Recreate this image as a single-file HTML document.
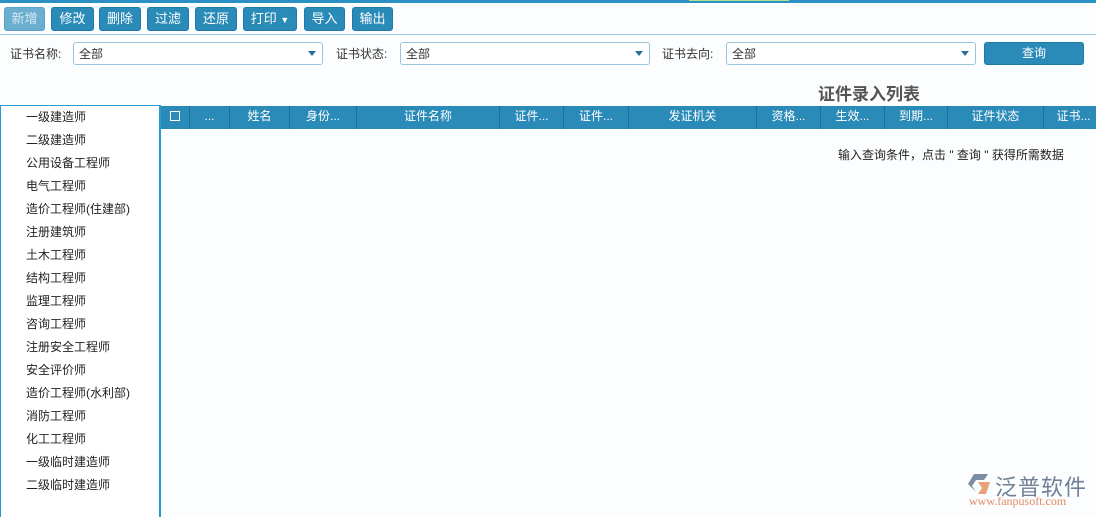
<!DOCTYPE html>
<html><head><meta charset="utf-8"><style>
*{margin:0;padding:0;box-sizing:border-box}
body{width:1096px;height:517px;background:#fbfdfe;font-family:"Liberation Sans","Noto Sans CJK SC",sans-serif;font-size:12px;color:#333;position:relative;overflow:hidden}
.abs{position:absolute}
.btn{position:absolute;top:7px;height:24px;background:#2a8ab8;color:#fff;border-radius:3px;font-size:13px;text-align:center;line-height:22px;border:1px solid #1f7aa6}
.sel{position:absolute;top:42px;height:23px;border:1px solid #9cc3dc;border-radius:3px;background:#fff;font-size:12px;line-height:22px;padding-left:5px}
.sel:after{content:"";position:absolute;right:6px;top:8px;border-left:4px solid transparent;border-right:4px solid transparent;border-top:5px solid #2a6f9a}
.lbl{position:absolute;top:45px;font-size:12px}
.th{position:absolute;top:106px;height:23px;line-height:21px;color:#fff;text-align:center;border-right:1px solid #1d6f96;font-size:12px}
.li{position:absolute;left:26px;font-size:12px;color:#222}
</style></head><body>
<div class="abs" style="left:0;top:0;width:1096px;height:3px;background:#2b90c4"></div>
<div class="abs" style="left:689px;top:0;width:100px;height:1px;background:#b8e08a"></div>
<div class="btn" style="left:4px;width:41px;background:#6aaed0;color:#d7e9f3;border-color:#5aa1c6">新增</div>
<div class="btn" style="left:51px;width:43px">修改</div>
<div class="btn" style="left:99px;width:42px">删除</div>
<div class="btn" style="left:147px;width:42px">过滤</div>
<div class="btn" style="left:195px;width:42px">还原</div>
<div class="btn" style="left:243px;width:54px">打印 <span style="font-size:9px">▼</span></div>
<div class="btn" style="left:304px;width:41px">导入</div>
<div class="btn" style="left:352px;width:41px">输出</div>
<div class="abs" style="left:0;top:34px;width:1096px;height:1px;background:#9cc7e0"></div>
<div class="lbl" style="left:10px">证书名称:</div>
<div class="sel" style="left:73px;width:250px">全部</div>
<div class="lbl" style="left:336px">证书状态:</div>
<div class="sel" style="left:400px;width:250px">全部</div>
<div class="lbl" style="left:662px">证书去向:</div>
<div class="sel" style="left:726px;width:250px">全部</div>
<div class="btn" style="left:984px;top:42px;width:100px;height:23px;line-height:21px;font-size:12px">查询</div>
<div class="abs" style="left:818px;top:80px;font-size:17px;font-weight:bold;color:#555">证件录入列表</div>
<div class="abs" style="left:0;top:105px;width:161px;height:412px;border-top:1px solid #2b9ad0;border-left:1px solid #2b9ad0;border-right:2px solid #2b9ad0;background:#fff"></div>
<div class="abs" style="left:161px;top:106px;width:935px;height:23px;background:#2a8ab8"></div>
<div class="th" style="left:160px;width:30px"><span style="display:inline-block;width:10px;height:10px;border:1.5px solid #fff;vertical-align:-1px"></span></div>
<div class="th" style="left:190px;width:40px">...</div>
<div class="th" style="left:230px;width:60px">姓名</div>
<div class="th" style="left:290px;width:67px">身份...</div>
<div class="th" style="left:357px;width:143px">证件名称</div>
<div class="th" style="left:500px;width:64px">证件...</div>
<div class="th" style="left:564px;width:65px">证件...</div>
<div class="th" style="left:629px;width:128px">发证机关</div>
<div class="th" style="left:757px;width:64px">资格...</div>
<div class="th" style="left:821px;width:64px">生效...</div>
<div class="th" style="left:885px;width:63px">到期...</div>
<div class="th" style="left:948px;width:96px">证件状态</div>
<div class="th" style="left:1044px;width:60px">证书...</div>
<div class="abs" style="left:838px;top:146px;font-size:12px;color:#222">输入查询条件，点击 " 查询 " 获得所需数据</div>
<div class="li" style="top:108px">一级建造师</div>
<div class="li" style="top:131px">二级建造师</div>
<div class="li" style="top:154px">公用设备工程师</div>
<div class="li" style="top:177px">电气工程师</div>
<div class="li" style="top:200px">造价工程师(住建部)</div>
<div class="li" style="top:223px">注册建筑师</div>
<div class="li" style="top:246px">土木工程师</div>
<div class="li" style="top:269px">结构工程师</div>
<div class="li" style="top:292px">监理工程师</div>
<div class="li" style="top:315px">咨询工程师</div>
<div class="li" style="top:338px">注册安全工程师</div>
<div class="li" style="top:361px">安全评价师</div>
<div class="li" style="top:384px">造价工程师(水利部)</div>
<div class="li" style="top:407px">消防工程师</div>
<div class="li" style="top:430px">化工工程师</div>
<div class="li" style="top:453px">一级临时建造师</div>
<div class="li" style="top:476px">二级临时建造师</div>
<svg class="abs" style="left:966px;top:472px" width="28" height="24" viewBox="0 0 28 24"><path d="M8 2 L22 2 L18 8 L10 8 L6 14 L10 20 L2 12 Z" fill="#7d8ea3"/><path d="M12 10 L24 10 L20 22 L12 22 L16 16 Z" fill="#e8a07a"/></svg>
<div class="abs" style="left:995px;top:470px;font-size:22px;color:#6f7f95;letter-spacing:1px">泛普软件</div>
<div class="abs" style="left:969px;top:494px;font-size:12px;color:#e08a60;font-family:'Liberation Serif',serif">www.fanpusoft.com</div>
</body></html>
